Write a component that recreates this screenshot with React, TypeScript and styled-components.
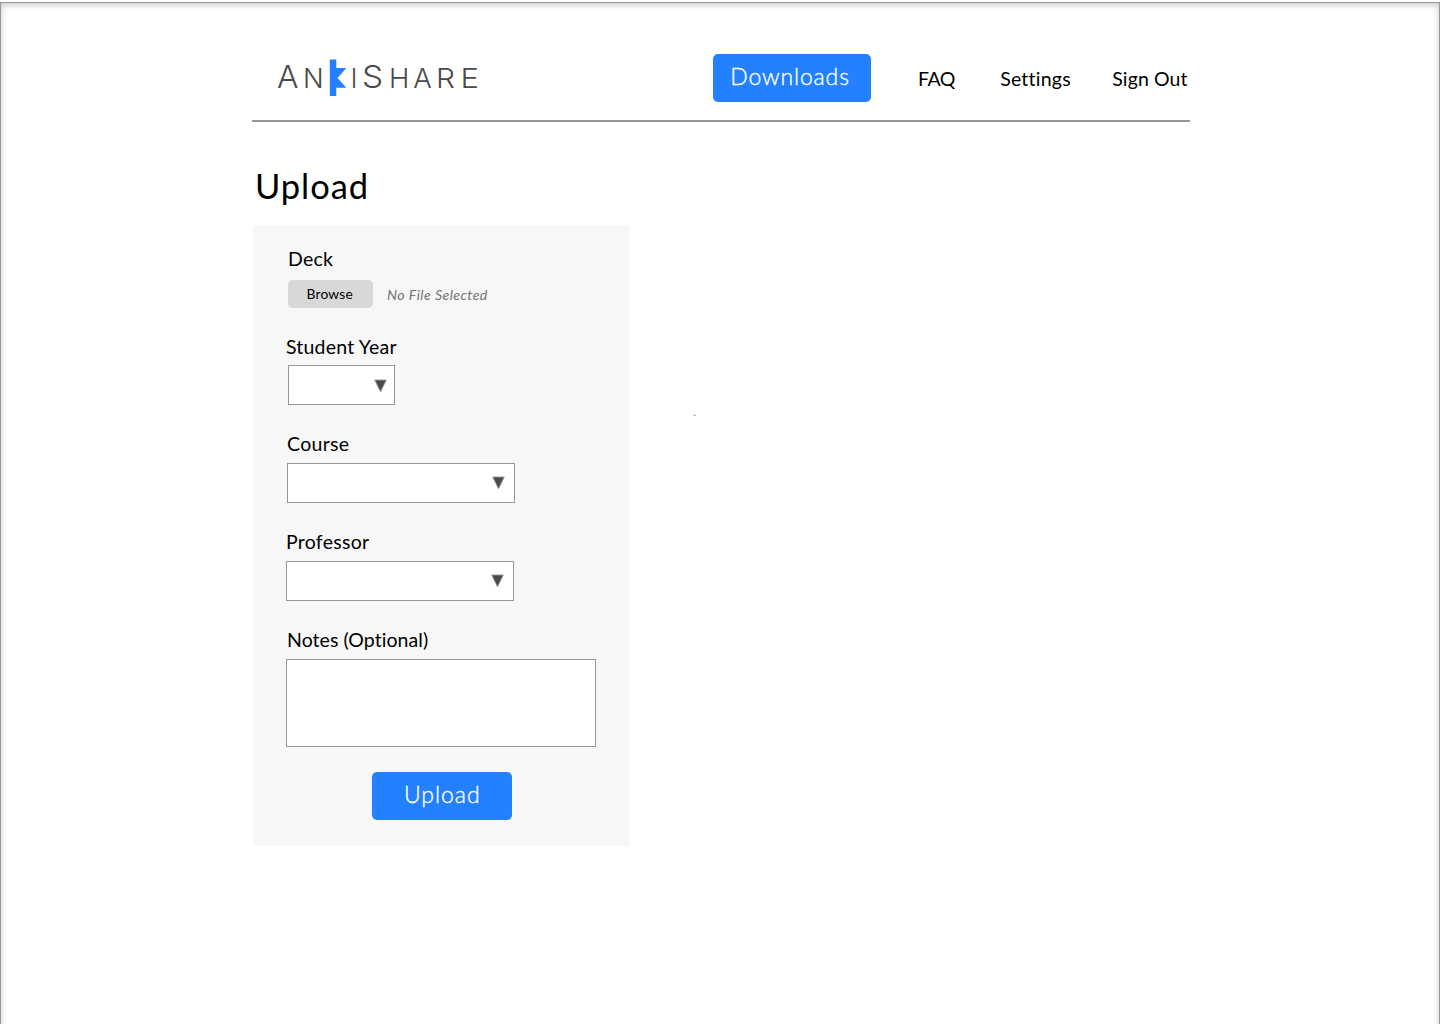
import React from "react";
import styled, { createGlobalStyle } from "styled-components";

const GlobalStyle = createGlobalStyle`
  * { box-sizing: border-box; }
  html { height: 100%; overflow: hidden; }
  body { margin: 0; height: 100%; background: #fff; overflow: hidden; }
  button, textarea { font-family: inherit; }
`;

const Page = styled.div`
  position: relative;
  margin-top: 2px;
  height: 1040px;
  padding: 0 250px 0 251px;
  border: 1px solid #979797;
  border-bottom: 0;
  background: #fff;
  box-shadow: inset 0 2px 6px rgba(0, 0, 0, 0.22);
  font-family: Lato, "Open Sans", sans-serif;
  color: #000;
`;

const Header = styled.header`
  display: flex;
  align-items: flex-start;
  width: 938px;
  height: 119px;
  padding: 51px 0 0 25px;
  border-bottom: 2px solid #979797;
`;

const Logo = styled.svg`
  display: block;
  flex: none;
  width: 204px;
  height: 44px;
  fill: #4a4a4a;
  font-family: Inter, sans-serif;
  font-weight: 300;
`;

const Nav = styled.nav`
  display: flex;
  align-items: flex-start;
  margin-left: 232px;
`;

const PrimaryButton = styled.button<{ $width: number; $inset: number; $spacing: number }>`
  display: flex;
  align-items: flex-start;
  flex: none;
  width: ${(p) => p.$width}px;
  height: 48px;
  padding: 0 0 0 ${(p) => p.$inset}px;
  border: 0;
  border-radius: 5px;
  background: #2380ff;
  color: #fff;
  font-size: 23px;
  font-weight: 300;
  line-height: 45px;
  letter-spacing: ${(p) => p.$spacing}px;
  white-space: nowrap;
  -webkit-text-stroke: 0.35px #fff;
`;

const NavLink = styled.a<{ $gap: number; $spacing: number }>`
  margin: 13px 0 0 ${(p) => p.$gap}px;
  font-size: 19.5px;
  line-height: 24px;
  letter-spacing: ${(p) => p.$spacing}px;
  white-space: nowrap;
`;

const Title = styled.h1`
  margin: 43px 0 0 3px;
  font-size: 34.5px;
  font-weight: 400;
  line-height: 41px;
  letter-spacing: 0.95px;
`;

const Card = styled.form`
  display: flex;
  flex-direction: column;
  align-items: flex-start;
  width: 377px;
  height: 621px;
  margin: 19px 0 0 1px;
  padding: 22px 33px 0;
  border-radius: 4px;
  background: #f7f7f7;
`;

const Field = styled.div<{ $height: number }>`
  display: flex;
  flex-direction: column;
  align-items: flex-start;
  flex: none;
  height: ${(p) => p.$height}px;
`;

const Label = styled.label<{ $height?: number; $indent?: number; $spacing: number }>`
  flex: none;
  height: ${(p) => p.$height ?? 31}px;
  padding-left: ${(p) => p.$indent ?? 0}px;
  font-size: 19.5px;
  line-height: 24px;
  letter-spacing: ${(p) => p.$spacing}px;
  white-space: nowrap;
`;

const FileRow = styled.div`
  display: flex;
  align-items: flex-start;
  padding-left: 2px;
`;

const BrowseButton = styled.button`
  width: 85px;
  height: 28px;
  padding: 0 0 0 18.5px;
  border: 0;
  border-radius: 5px;
  background: #d8d8d8;
  color: #000;
  font-size: 13.8px;
  line-height: 28px;
  letter-spacing: 0.2px;
  text-align: left;
`;

const FileStatus = styled.span`
  margin-left: 14px;
  color: #747474;
  font-size: 14.2px;
  font-style: italic;
  line-height: 30px;
  letter-spacing: 0.42px;
  white-space: nowrap;
`;

const SelectBox = styled.div<{ $width: number; $indent?: number; $arrowTop: number; $arrowRight: number }>`
  display: flex;
  align-items: flex-start;
  justify-content: flex-end;
  width: ${(p) => p.$width}px;
  height: 40px;
  margin-left: ${(p) => p.$indent ?? 0}px;
  padding: ${(p) => p.$arrowTop}px ${(p) => p.$arrowRight}px 0 0;
  border: 1px solid #979797;
  background: #fff;
`;

const ArrowIcon = styled.svg`
  display: block;
  width: 13px;
  height: 14px;
`;

const NotesInput = styled.textarea`
  display: block;
  width: 310px;
  height: 88px;
  padding: 8px;
  border: 1px solid #979797;
  border-radius: 0;
  background: #fff;
  resize: none;
`;

const Submit = styled.div`
  padding-left: 86px;
`;

const Speck = styled.svg`
  position: absolute;
  left: 692px;
  top: 411px;
  width: 3px;
  height: 2px;
`;

const letters = [
  { char: "A", x: 0, size: 31, stretch: 1.03 },
  { char: "N", x: 26, size: 26.7, stretch: 1.02 },
  { char: "I", x: 73.6, size: 26.7, stretch: 1 },
  { char: "S", x: 85, size: 31, stretch: 1.08 },
  { char: "H", x: 112, size: 26.7, stretch: 1.03 },
  { char: "A", x: 136.2, size: 26.7, stretch: 1.03 },
  { char: "R", x: 159, size: 26.7, stretch: 1.12 },
  { char: "E", x: 183.4, size: 26.7, stretch: 1.16 },
];

const Arrow = () => (
  <ArrowIcon viewBox="0 0 13 14">
    <path d="M0.7 1H12.3L6.5 12.8Z" fill="#4a4a4a" stroke="#979797" strokeWidth="0.9" />
  </ArrowIcon>
);

export default function App() {
  return (
    <>
      <GlobalStyle />
      <Page>
        <Header>
          <Logo viewBox="0 0 204 44">
            {letters.map((l, i) => (
              <text key={i} transform={`translate(${l.x} 33.7) scale(${l.stretch} 1)`} fontSize={l.size}>
                {l.char}
              </text>
            ))}
            <path d="M52.8 5.5H59.3V14H69.4L60.5 24L69.4 33.8H59.3V42H52.8Z" fill="#2380ff" />
          </Logo>
          <Nav>
            <PrimaryButton type="button" $width={158} $inset={17.3} $spacing={0.86}>
              Downloads
            </PrimaryButton>
            <NavLink $gap={47} $spacing={-0.5}>FAQ</NavLink>
            <NavLink $gap={45.3} $spacing={0.23}>Settings</NavLink>
            <NavLink $gap={41.4} $spacing={0.1}>Sign Out</NavLink>
          </Nav>
        </Header>
        <Title>Upload</Title>
        <Card>
          <Field $height={88}>
            <Label $height={33} $indent={2} $spacing={0.23}>Deck</Label>
            <FileRow>
              <BrowseButton type="button">Browse</BrowseButton>
              <FileStatus>No File Selected</FileStatus>
            </FileRow>
          </Field>
          <Field $height={97}>
            <Label $height={30} $spacing={0.2}>Student Year</Label>
            <SelectBox $width={107} $indent={2} $arrowTop={13} $arrowRight={7}>
              <Arrow />
            </SelectBox>
          </Field>
          <Field $height={98}>
            <Label $indent={1} $spacing={0.3}>Course</Label>
            <SelectBox $width={228} $indent={1} $arrowTop={12} $arrowRight={9}>
              <Arrow />
            </SelectBox>
          </Field>
          <Field $height={98}>
            <Label $spacing={0.27}>Professor</Label>
            <SelectBox $width={228} $arrowTop={12} $arrowRight={9}>
              <Arrow />
            </SelectBox>
          </Field>
          <Field $height={144}>
            <Label $indent={1} $spacing={0.06}>Notes (Optional)</Label>
            <NotesInput />
          </Field>
          <Submit>
            <PrimaryButton type="button" $width={140} $inset={32} $spacing={0.95}>
              Upload
            </PrimaryButton>
          </Submit>
        </Card>
        <Speck viewBox="0 0 3 2">
          <rect x="0" y="0" width="1" height="1" fill="#c4c4c4" />
          <rect x="1" y="1" width="1" height="1" fill="#858585" />
          <rect x="2" y="1" width="1" height="1" fill="#d0d0d0" />
        </Speck>
      </Page>
    </>
  );
}
